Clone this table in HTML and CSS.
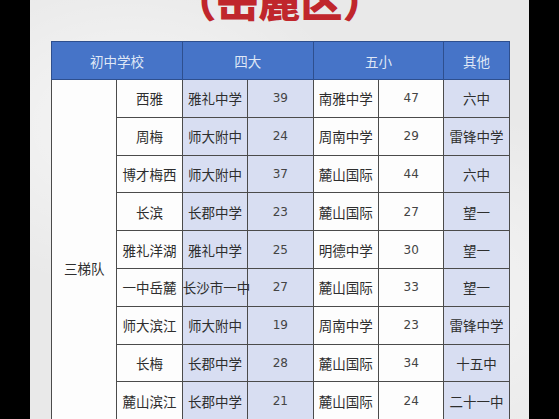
FILE: index.html
```html
<!DOCTYPE html>
<html lang="zh">
<head>
<meta charset="utf-8">
<link rel="stylesheet" href="styles.css">
</head>
<body>
<div class="page">
  <h1 class="title">（岳麓区）</h1>
  <table class="grid">
    <colgroup>
      <col><col><col><col><col><col><col>
    </colgroup>
    <thead>
      <tr>
        <th colspan="2">初中学校</th>
        <th colspan="2">四大</th>
        <th colspan="2">五小</th>
        <th>其他</th>
      </tr>
    </thead>
    <tbody>
      <tr><td class="tier" rowspan="10">三梯队</td><td>西雅</td><td class="tint">雅礼中学</td><td class="tint num">39</td><td>南雅中学</td><td class="num">47</td><td class="tint">六中</td></tr>
      <tr><td>周梅</td><td class="tint">师大附中</td><td class="tint num">24</td><td>周南中学</td><td class="num">29</td><td class="tint">雷锋中学</td></tr>
      <tr><td>博才梅西</td><td class="tint">师大附中</td><td class="tint num">37</td><td>麓山国际</td><td class="num">44</td><td class="tint">六中</td></tr>
      <tr><td>长滨</td><td class="tint">长郡中学</td><td class="tint num">23</td><td>麓山国际</td><td class="num">27</td><td class="tint">望一</td></tr>
      <tr><td>雅礼洋湖</td><td class="tint">雅礼中学</td><td class="tint num">25</td><td>明德中学</td><td class="num">30</td><td class="tint">望一</td></tr>
      <tr><td>一中岳麓</td><td class="tint">长沙市一中</td><td class="tint num">27</td><td>麓山国际</td><td class="num">33</td><td class="tint">望一</td></tr>
      <tr><td>师大滨江</td><td class="tint">师大附中</td><td class="tint num">19</td><td>周南中学</td><td class="num">23</td><td class="tint">雷锋中学</td></tr>
      <tr><td>长梅</td><td class="tint">长郡中学</td><td class="tint num">28</td><td>麓山国际</td><td class="num">34</td><td class="tint">十五中</td></tr>
      <tr><td>麓山滨江</td><td class="tint">长郡中学</td><td class="tint num">21</td><td>麓山国际</td><td class="num">24</td><td class="tint">二十一中</td></tr>
      <tr><td>博才咸嘉</td><td class="tint">长郡中学</td><td class="tint num">20</td><td>周南中学</td><td class="num">26</td><td class="tint">六中</td></tr>
    </tbody>
  </table>
</div>
</body>
</html>
```

FILE: styles.css
```css
html, body {
  margin: 0;
  padding: 0;
  background: #000;
  height: 419px;
  overflow: hidden;
}

.page {
  margin: 0 30px;
  height: 419px;
  overflow: hidden;
  background:
    radial-gradient(ellipse at 20% 30%, rgba(255,255,255,0.6), rgba(255,255,255,0) 40%),
    radial-gradient(ellipse at 80% 70%, rgba(255,255,255,0.5), rgba(255,255,255,0) 45%),
    #e9e9e9;
  font-family: "Noto Sans CJK SC", "Noto Sans", sans-serif;
}

.title {
  margin: -25px 0 0 0;
  height: 66px;
  line-height: 48px;
  font-size: 42px;
  font-weight: 900;
  color: #c0262c;
  text-align: center;
  letter-spacing: 0;
}

.grid {
  margin-left: 21px;
  width: 458px;
  table-layout: fixed;
  border-collapse: collapse;
  font-size: 13.5px;
  color: #2e2e2e;
}

.grid col {
  width: 65.4px;
}

.grid th {
  height: 37px;
  background: #4674c8;
  color: #dfe7f6;
  font-weight: 400;
  font-size: 13.5px;
  border: 1px solid #2e4f8e;
  padding: 0;
}

.grid td {
  height: 36.8px;
  padding: 0;
  text-align: center;
  background: #fdfdfd;
  border: 1px solid #4b4b4b;
  white-space: nowrap;
}

.grid td.tint {
  background: #d8def2;
}

.grid td.num {
  font-family: "DejaVu Sans", sans-serif;
  font-size: 12px;
  color: #444;
}

.grid td.tier {
  background: #fdfdfd;
}
```
